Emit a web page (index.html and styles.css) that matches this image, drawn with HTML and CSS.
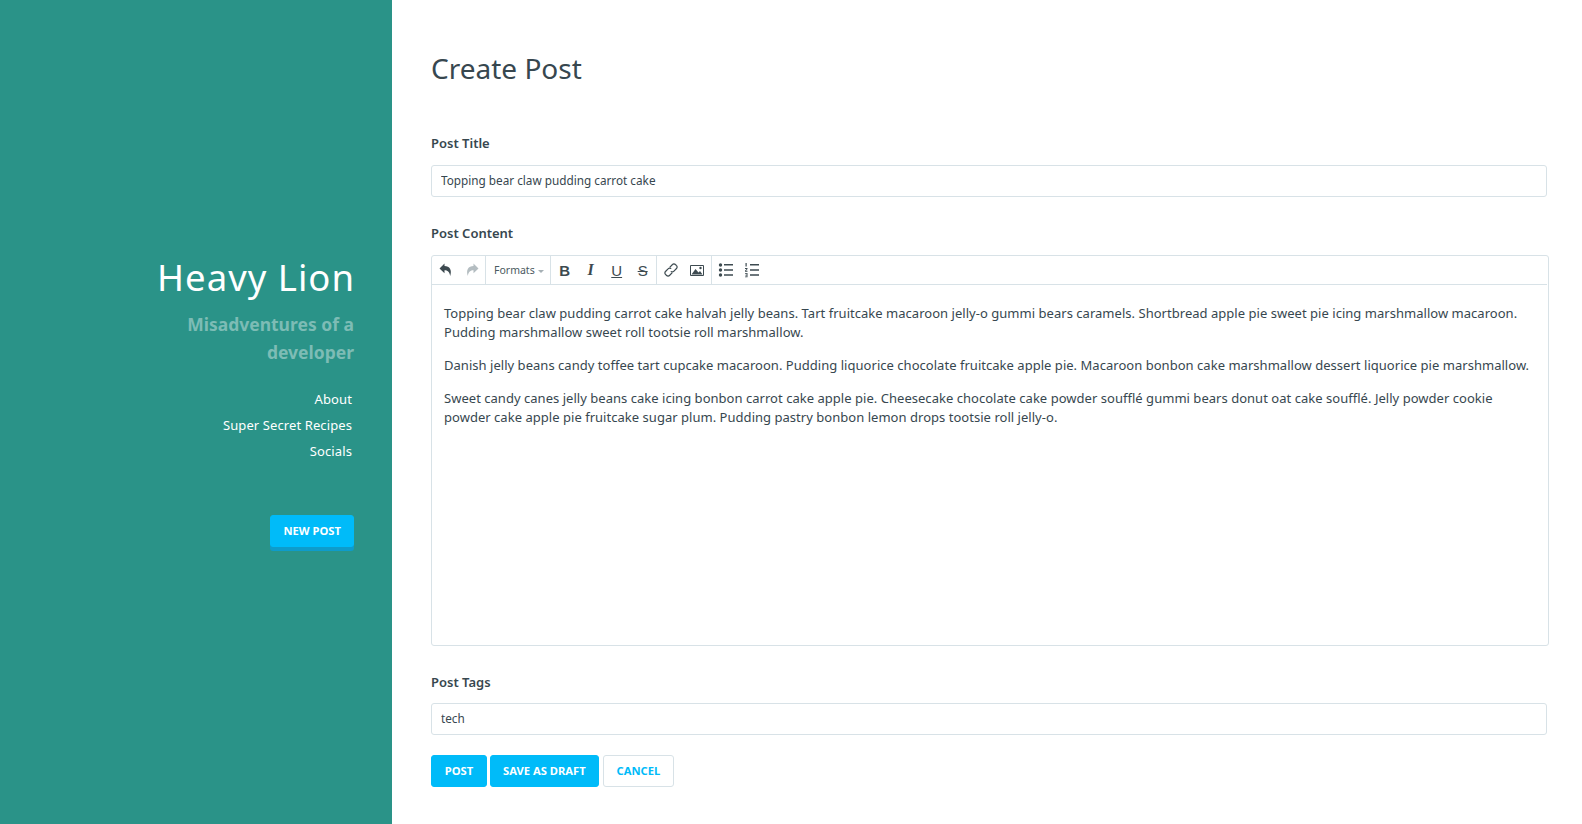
FILE: index.html
```html
<!DOCTYPE html>
<html lang="en">
<head>
    <meta charset="UTF-8">
    <meta name="viewport" content="width=device-width, initial-scale=1.0">
    <title>Create Post</title>
    <link rel="stylesheet" href="styles.css">
</head>
<body>
    <div class="page">
        <aside class="sidebar">
            <h1 class="site-title">Heavy Lion</h1>
            <p class="site-tagline">Misadventures of a developer</p>
            <nav class="site-nav">
                <a href="#">About</a>
                <a href="#">Super Secret Recipes</a>
                <a href="#">Socials</a>
            </nav>
            <a class="btn btn-new" href="#">NEW POST</a>
        </aside>

        <main class="content">
            <h2 class="page-title">Create Post</h2>

            <form class="post-form">
                <label class="field-label" for="post-title">Post Title</label>
                <input class="field-input" type="text" id="post-title" value="Topping bear claw pudding carrot cake">

                <div class="field-label label-content">Post Content</div>
                <div class="editor">
                    <div class="toolbar">
                        <div class="tool-group group-tight">
                            <span class="tool">
                                <svg width="16" height="16" viewBox="0 0 16 16"><path d="M6.500 1.500 1.500 6.500l5 4.800V8.200c3 0 5 1.300 5.700 5.800 2-6-.5-10-5.700-10z" fill="#3d4a50"/></svg>
                            </span>
                            <span class="tool">
                                <svg width="16" height="16" viewBox="0 0 16 16"><path d="m9.500 1.500 5 5-5 4.800V8.200c-3 0-5 1.300-5.700 5.800-2-6 .5-10 5.700-10z" fill="#b4bdc1"/></svg>
                            </span>
                        </div>
                        <div class="tool-group">
                            <span class="formats">Formats<i class="caret"></i></span>
                        </div>
                        <div class="tool-group group-tight">
                            <span class="tool glyph glyph-bold">B</span>
                            <span class="tool glyph glyph-italic">I</span>
                            <span class="tool glyph glyph-under">U</span>
                            <span class="tool glyph glyph-strike">S</span>
                        </div>
                        <div class="tool-group">
                            <span class="tool">
                                <svg width="16" height="16" viewBox="0 0 16 16" fill="none" stroke="#3d4a50" stroke-width="1.200"><path d="m6.700 5.300 2.800-2.800a2 2 0 0 1 2.900 0l1.100 1.100a2 2 0 0 1 0 2.900l-2.800 2.800a2 2 0 0 1-2.900 0"/><path d="m9.300 10.700-2.800 2.800a2 2 0 0 1-2.900 0l-1.100-1.100a2 2 0 0 1 0-2.900l2.800-2.800a2 2 0 0 1 2.900 0"/></svg>
                            </span>
                            <span class="tool">
                                <svg width="16" height="16" viewBox="0 0 16 16"><path d="M1.500 3.500h13v10h-13z" fill="none" stroke="#3d4a50" stroke-width="1"/><path d="M2.500 12.500 6.500 7l3 3.500 1.500-1.500 2.500 3.500z" fill="#3d4a50"/><circle cx="11.500" cy="6" r="1.200" fill="#3d4a50"/></svg>
                            </span>
                        </div>
                        <div class="tool-group">
                            <span class="tool">
                                <svg width="16" height="16" viewBox="0 0 16 16" fill="#3d4a50"><circle cx="2.500" cy="3" r="1.700"/><circle cx="2.500" cy="8" r="1.700"/><circle cx="2.500" cy="13" r="1.700"/><path d="M6 2h9v1.500H6zM6 7.200h9v1.500H6zM6 12.300h9v1.500H6z"/></svg>
                            </span>
                            <span class="tool">
                                <svg width="16" height="16" viewBox="0 0 16 16" fill="#3d4a50"><path d="M1.500 1h1.200v3.500H1.500zM1 6h2.500v1L2 8.800h1.500v.9H1v-1l1.500-1.700H1zM1 11h2.500v4.200H1v-.8h1.600v-.9H1.300v-.7h1.300v-1H1zM6 2h9v1.500H6zM6 7.200h9v1.500H6zM6 12.300h9v1.500H6z"/></svg>
                            </span>
                        </div>
                    </div>
                    <div class="editor-body">
                        <p>Topping bear claw pudding carrot cake halvah jelly beans. Tart fruitcake macaroon jelly-o gummi bears caramels. Shortbread apple pie sweet pie icing marshmallow macaroon. Pudding marshmallow sweet roll tootsie roll marshmallow.</p>
                        <p>Danish jelly beans candy toffee tart cupcake macaroon. Pudding liquorice chocolate fruitcake apple pie. Macaroon bonbon cake marshmallow dessert liquorice pie marshmallow.</p>
                        <p>Sweet candy canes jelly beans cake icing bonbon carrot cake apple pie. Cheesecake chocolate cake powder soufflé gummi bears donut oat cake soufflé. Jelly powder cookie powder cake apple pie fruitcake sugar plum. Pudding pastry bonbon lemon drops tootsie roll jelly-o.</p>
                    </div>
                </div>

                <label class="field-label label-tags" for="post-tags">Post Tags</label>
                <input class="field-input" type="text" id="post-tags" value="tech">

                <div class="form-actions">
                    <button class="btn" type="button">POST</button>
                    <button class="btn" type="button">SAVE AS DRAFT</button>
                    <button class="btn btn-ghost" type="button">CANCEL</button>
                </div>
            </form>
        </main>
    </div>
</body>
</html>
```

FILE: styles.css
```css
body {
    font-family: "Noto Sans", "Open Sans", sans-serif;
    font-size: 13px;
    color: #37474f;
    margin: 0;
    padding: 0;
    background: #fff;
}

.page {
    display: flex;
    height: 824px;
    overflow: hidden;
}

.sidebar {
    width: 392px;
    flex: none;
    box-sizing: border-box;
    background: #2a9388;
    padding: 0 38px 26px 0;
    text-align: right;
    display: flex;
    flex-direction: column;
    align-items: flex-end;
    justify-content: center;
}

.site-title {
    margin: 0 -1px 0 0;
    font-size: 36.500px;
    font-weight: 400;
    letter-spacing: 1px;
    line-height: 50px;
    color: #fff;
}

.site-tagline {
    margin: 8px 0 0;
    width: 230px;
    font-size: 17.500px;
    font-weight: 700;
    line-height: 28px;
    color: #7dbcb5;
}

.site-nav {
    display: flex;
    flex-direction: column;
    gap: 8px;
    margin: 24px 2px 0 0;
}

.site-nav a {
    color: #fff;
    text-decoration: none;
    line-height: 18px;
    letter-spacing: 0.100px;
}

.btn {
    display: inline-block;
    box-sizing: border-box;
    min-width: 56px;
    height: 32px;
    padding: 0 12px;
    border: 1px solid #00bbf9;
    border-radius: 3px;
    background: #00bbf9;
    color: #fff;
    font-family: inherit;
    font-size: 11.200px;
    font-weight: 700;
    line-height: 30px;
    text-align: center;
    text-decoration: none;
}

.btn-new {
    margin-top: 55px;
    box-shadow: 0 4px 0 #0e9ccb;
}

.btn-ghost {
    margin-left: 1px;
    padding: 0 13px;
    background: #fff;
    border-color: #d8e2e7;
    color: #00bbf9;
}

.content {
    flex: 1;
    padding: 0 35px 0 39px;
}

.page-title {
    margin: 0;
    padding-top: 48px;
    font-size: 28px;
    font-weight: 400;
    line-height: 40px;
}

.field-label {
    display: block;
    font-weight: 600;
    line-height: 20px;
    margin-bottom: 12px;
}

.post-form {
    padding-top: 45px;
}

.label-content {
    margin-top: 26px;
    margin-bottom: 12px;
}

.label-tags {
    margin-top: 26px;
    margin-bottom: 11px;
}

.field-input {
    display: block;
    width: 100%;
    box-sizing: border-box;
    height: 32px;
    padding: 0 9px 2px;
    border: 1px solid #d8e2e7;
    border-radius: 3px;
    font-family: inherit;
    font-size: 11.750px;
    color: #37474f;
}

.editor {
    box-sizing: border-box;
    width: calc(100% + 2px);
    height: 391px;
    border: 1px solid #d8e2e7;
    border-radius: 3px;
}

.toolbar {
    display: flex;
    height: 28px;
    margin-right: 1px;
    border-bottom: 1px solid #d8e2e7;
}

.tool-group {
    display: flex;
    align-items: center;
    padding: 0 1px;
    border-right: 1px solid #d8e2e7;
}

.group-tight {
    padding-right: 0;
}

.tool-group:last-child {
    border-right: none;
}

.tool {
    display: flex;
    align-items: center;
    justify-content: center;
    width: 26px;
    height: 26px;
}

.formats {
    padding: 0 5px 0 7px;
    font-size: 10.500px;
    color: #4b5a61;
}

.caret {
    display: inline-block;
    margin-left: 3px;
    vertical-align: middle;
    border: 3px solid transparent;
    border-top-color: #a6b0b5;
    border-bottom: none;
}

.glyph {
    font-family: "Liberation Sans", sans-serif;
    font-size: 15px;
    color: #3d4a50;
}

.glyph-bold {
    font-weight: 700;
}

.glyph-italic {
    font-family: "Liberation Serif", serif;
    font-style: italic;
    font-weight: 700;
    font-size: 16px;
}

.glyph-under {
    text-decoration: underline;
}

.glyph-strike {
    text-decoration: line-through;
}

.editor-body {
    padding: 19px 12px 0;
    line-height: 19px;
    letter-spacing: 0.030px;
}

.editor-body p {
    margin: 0 0 14px;
}

.form-actions {
    display: flex;
    gap: 3px;
    margin-top: 20px;
}
```
